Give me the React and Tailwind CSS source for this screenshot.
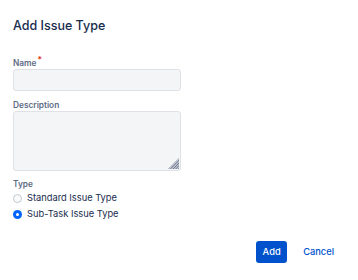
const FONT = { fontFamily: 'Inter, "Liberation Sans", sans-serif' };

function Radio({ checked, label }) {
  return (
    <label className="flex h-[16px] items-center">
      {checked ? (
        <span className="flex h-[9px] w-[9px] items-center justify-center rounded-full bg-[#0065ff]">
          <span className="h-[3px] w-[3px] rounded-full bg-white" />
        </span>
      ) : (
        <span className="h-[9px] w-[9px] rounded-full border border-[#c1c7d0] bg-[#fafbfc]" />
      )}
      <span className="ml-[5px] text-[9.3px] leading-[16px] text-[#172b4d]">{label}</span>
    </label>
  );
}

function Hatch() {
  return (
    <svg className="absolute bottom-[1px] right-[1px]" width="11" height="11" viewBox="0 0 11 11">
      <defs>
        <clipPath id="tri">
          <polygon points="11,0 11,11 0,11" />
        </clipPath>
      </defs>
      <g clipPath="url(#tri)" stroke="#5e6c84" strokeWidth="0.9">
        {[0, 1.6, 3.2, 4.8, 6.4, 8, 9.6, 11.2, 12.8, 14.4, 16, 17.6, 19.2, 20.8].map((o) => (
          <line key={o} x1={o - 11} y1="11" x2={o} y2="0" />
        ))}
      </g>
    </svg>
  );
}

export default function App() {
  return (
    <div className="h-[280px] w-[358px] bg-white pl-[13px] pt-[18px]" style={FONT}>
      <h1 className="text-[12.5px] leading-[16px] font-medium text-[#172b4d]">Add Issue Type</h1>

      <div className="mt-[24px] w-[168px]">
        <div className="text-[8.3px] leading-[11px] font-semibold text-[#5e6c84]">
          Name<span className="relative -top-[3px] ml-[1px] text-[#de350b]">*</span>
        </div>
        <div className="h-[22px] rounded-[3px] border border-[#dfe1e6] bg-[#f4f5f7]" />

        <div className="mt-[9px] text-[8.3px] leading-[11px] font-semibold text-[#5e6c84]">Description</div>
        <div className="relative h-[60px] rounded-[3px] border border-[#dfe1e6] bg-[#f4f5f7]">
          <Hatch />
        </div>

        <div className="mt-[8px] text-[8.3px] leading-[11px] font-semibold text-[#5e6c84]">Type</div>
        <Radio label="Standard Issue Type" />
        <Radio checked label="Sub-Task Issue Type" />
      </div>

      <div className="mt-[19px] flex items-center justify-end pr-[24px]">
        <button className="h-[22px] w-[31px] rounded-[3px] bg-[#0052cc] text-[9.3px] font-medium text-white">
          Add
        </button>
        <button className="ml-[16px] text-[9.3px] font-medium text-[#0052cc]">Cancel</button>
      </div>
    </div>
  );
}
